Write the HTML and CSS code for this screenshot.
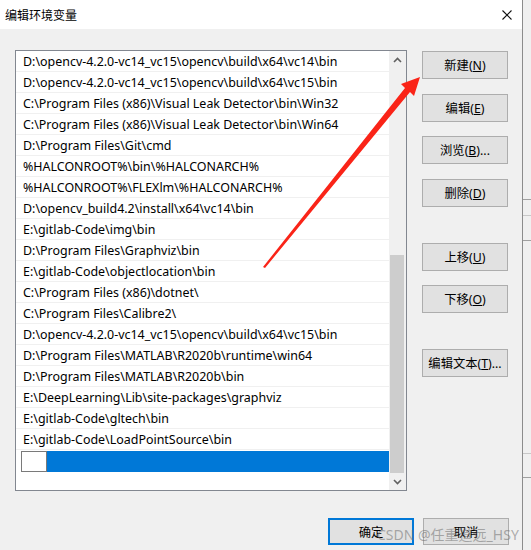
FILE: index.html
```html
<!DOCTYPE html>
<html lang="zh-CN">
<head>
<meta charset="utf-8">
<title>编辑环境变量</title>
<link rel="stylesheet" href="styles.css">
</head>
<body>
<div class="screen">
  <div class="dialog">
    <div class="titlebar">
      <span class="title">编辑环境变量</span>
      <svg class="close" width="10" height="10" viewBox="0 0 10 10"><path d="M0.5 0.5 L9.5 9.5 M9.5 0.5 L0.5 9.5" stroke="#111" stroke-width="1.1" fill="none"/></svg>
    </div>
    <div class="content">
      <div class="listbox">
        <div class="rows">
          <div class="row">D:\opencv-4.2.0-vc14_vc15\opencv\build\x64\vc14\bin</div>
          <div class="row">D:\opencv-4.2.0-vc14_vc15\opencv\build\x64\vc15\bin</div>
          <div class="row">C:\Program Files (x86)\Visual Leak Detector\bin\Win32</div>
          <div class="row">C:\Program Files (x86)\Visual Leak Detector\bin\Win64</div>
          <div class="row">D:\Program Files\Git\cmd</div>
          <div class="row">%HALCONROOT%\bin\%HALCONARCH%</div>
          <div class="row">%HALCONROOT%\FLEXlm\%HALCONARCH%</div>
          <div class="row">D:\opencv_build4.2\install\x64\vc14\bin</div>
          <div class="row">E:\gitlab-Code\img\bin</div>
          <div class="row">D:\Program Files\Graphviz\bin</div>
          <div class="row">E:\gitlab-Code\objectlocation\bin</div>
          <div class="row">C:\Program Files (x86)\dotnet\</div>
          <div class="row">C:\Program Files\Calibre2\</div>
          <div class="row">D:\opencv-4.2.0-vc14_vc15\opencv\build\x64\vc15\bin</div>
          <div class="row">D:\Program Files\MATLAB\R2020b\runtime\win64</div>
          <div class="row">D:\Program Files\MATLAB\R2020b\bin</div>
          <div class="row">E:\DeepLearning\Lib\site-packages\graphviz</div>
          <div class="row">E:\gitlab-Code\gltech\bin</div>
          <div class="row">E:\gitlab-Code\LoadPointSource\bin</div>
          <div class="row selected"><span class="editbox"></span></div>
        </div>
        <div class="scrollbar">
          <div class="sb-btn"><svg width="9" height="6" viewBox="0 0 9 6"><path d="M1 5 L4.5 1.5 L8 5" stroke="#606060" stroke-width="1.6" fill="none"/></svg></div>
          <div class="sb-track"><div class="sb-thumb"></div></div>
          <div class="sb-btn"><svg width="9" height="6" viewBox="0 0 9 6"><path d="M1 1 L4.5 4.5 L8 1" stroke="#606060" stroke-width="1.6" fill="none"/></svg></div>
        </div>
      </div>
      <div class="buttons">
        <div class="btn b1">新建(<u>N</u>)</div>
        <div class="btn b2">编辑(<u>E</u>)</div>
        <div class="btn b3">浏览(<u>B</u>)...</div>
        <div class="btn b4">删除(<u>D</u>)</div>
        <div class="btn b5">上移(<u>U</u>)</div>
        <div class="btn b6">下移(<u>O</u>)</div>
        <div class="btn b7">编辑文本(<u>T</u>)...</div>
      </div>
    </div>
    <div class="footer">
      <div class="btn ok">确定</div>
      <div class="btn">取消</div>
    </div>
  </div>
  <div class="bgwin">
    <div class="bg-a"></div>
    <div class="bg-b"></div>
    <div class="bg-c"></div>
    <div class="bg-d"></div>
    <div class="bg-e"></div>
    <div class="bg-f"></div>
  </div>
  <svg class="arrow" width="531" height="550" viewBox="0 0 531 550">
    <polygon points="263,267 405,88 401,84 420,77 414,96 410,92 265,268" fill="#fa2418"/>
  </svg>
  <div class="watermark">CSDN @任重道远_HSY</div>
</div>
</body>
</html>
```

FILE: styles.css
```css
* { box-sizing: border-box; }
html, body { margin: 0; padding: 0; }
body {
  font-family: "Noto Sans", "Noto Sans CJK SC", sans-serif;
  font-size: 12px;
  color: #000;
  background: #f0f0f0;
}
.screen {
  position: relative;
  width: 531px;
  height: 550px;
  display: flex;
  overflow: hidden;
}
.dialog {
  width: 522px;
  height: 550px;
  background: #f0f0f0;
  display: flex;
  flex-direction: column;
}
.titlebar {
  height: 29px;
  background: #fff;
  display: flex;
  align-items: center;
  justify-content: space-between;
  padding: 0 10px 0 5px;
}
.title {
  font-family: "Noto Sans CJK SC", sans-serif;
  font-size: 12px;
  color: #000;
}
.content {
  display: flex;
  padding: 21px 0 0 15px;
  gap: 15px;
}
.listbox {
  width: 392px;
  height: 441px;
  border: 1px solid #828790;
  background: #fff;
  display: flex;
}
.rows {
  flex: 1;
  display: flex;
  flex-direction: column;
}
.row {
  height: 21px;
  border-bottom: 1px solid #f0f0f0;
  padding: 2px 0 0 7px;
  line-height: 18px;
  white-space: nowrap;
  overflow: hidden;
  font-size: 12.45px;
}
.row.selected {
  margin-left: 5px;
  padding: 0;
  background: #0078d7;
  border-bottom: none;
  display: flex;
  margin-top: 1px;
}
.editbox {
  width: 26px;
  height: 21px;
  background: #fff;
  border: 1px solid #7a7a7a;
}
.scrollbar {
  width: 17px;
  background: #f0f0f0;
  display: flex;
  flex-direction: column;
}
.sb-btn {
  height: 17px;
  display: flex;
  align-items: center;
  justify-content: center;
}
.sb-track {
  flex: 1;
  display: flex;
  flex-direction: column;
  justify-content: flex-end;
}
.sb-thumb {
  height: 218px;
  margin: 0 2px 0 1px;
  background: #cdcdcd;
}
.buttons {
  display: flex;
  flex-direction: column;
}
.btn {
  width: 86px;
  height: 28px;
  background: #e1e1e1;
  border: 1px solid #adadad;
  display: flex;
  align-items: center;
  justify-content: center;
  font-size: 12.3px;
  white-space: nowrap;
}
.b1 { margin-top: 1px; }
.b2 { margin-top: 15px; }
.b3 { margin-top: 14px; }
.b4 { margin-top: 15px; }
.b5 { margin-top: 36px; }
.b6 { margin-top: 14px; }
.b7 { margin-top: 36px; }
.footer {
  display: flex;
  justify-content: flex-end;
  gap: 9px;
  padding: 27px 13px 0 0;
}
.footer .btn { height: 27px; }
.ok { border: 2px solid #0078d7; }
.bgwin {
  flex: 1;
  border-left: 1px solid #8c8c8c;
  background: #f0f0f0;
  display: flex;
  flex-direction: column;
}
.bg-a { height: 199px; }
.bg-b { height: 16px; border-top: 1px solid #a0a0a0; }
.bg-c { height: 25px; border-top: 1px solid #c8c8c8; }
.bg-d { height: 213px; border-top: 1px solid #a0a0a0; }
.bg-e { height: 24px; border-top: 1px solid #c8c8c8; }
.bg-f { flex: 1; border-top: 1px solid #a0a0a0; }
.arrow {
  position: absolute;
  left: 0;
  top: 0;
  pointer-events: none;
}
.watermark {
  position: absolute;
  left: 377px;
  top: 524px;
  font-family: "Noto Sans", "Noto Sans CJK SC", sans-serif;
  font-size: 14px;
  color: rgba(110, 110, 110, 0.55);
  white-space: nowrap;
}
```
